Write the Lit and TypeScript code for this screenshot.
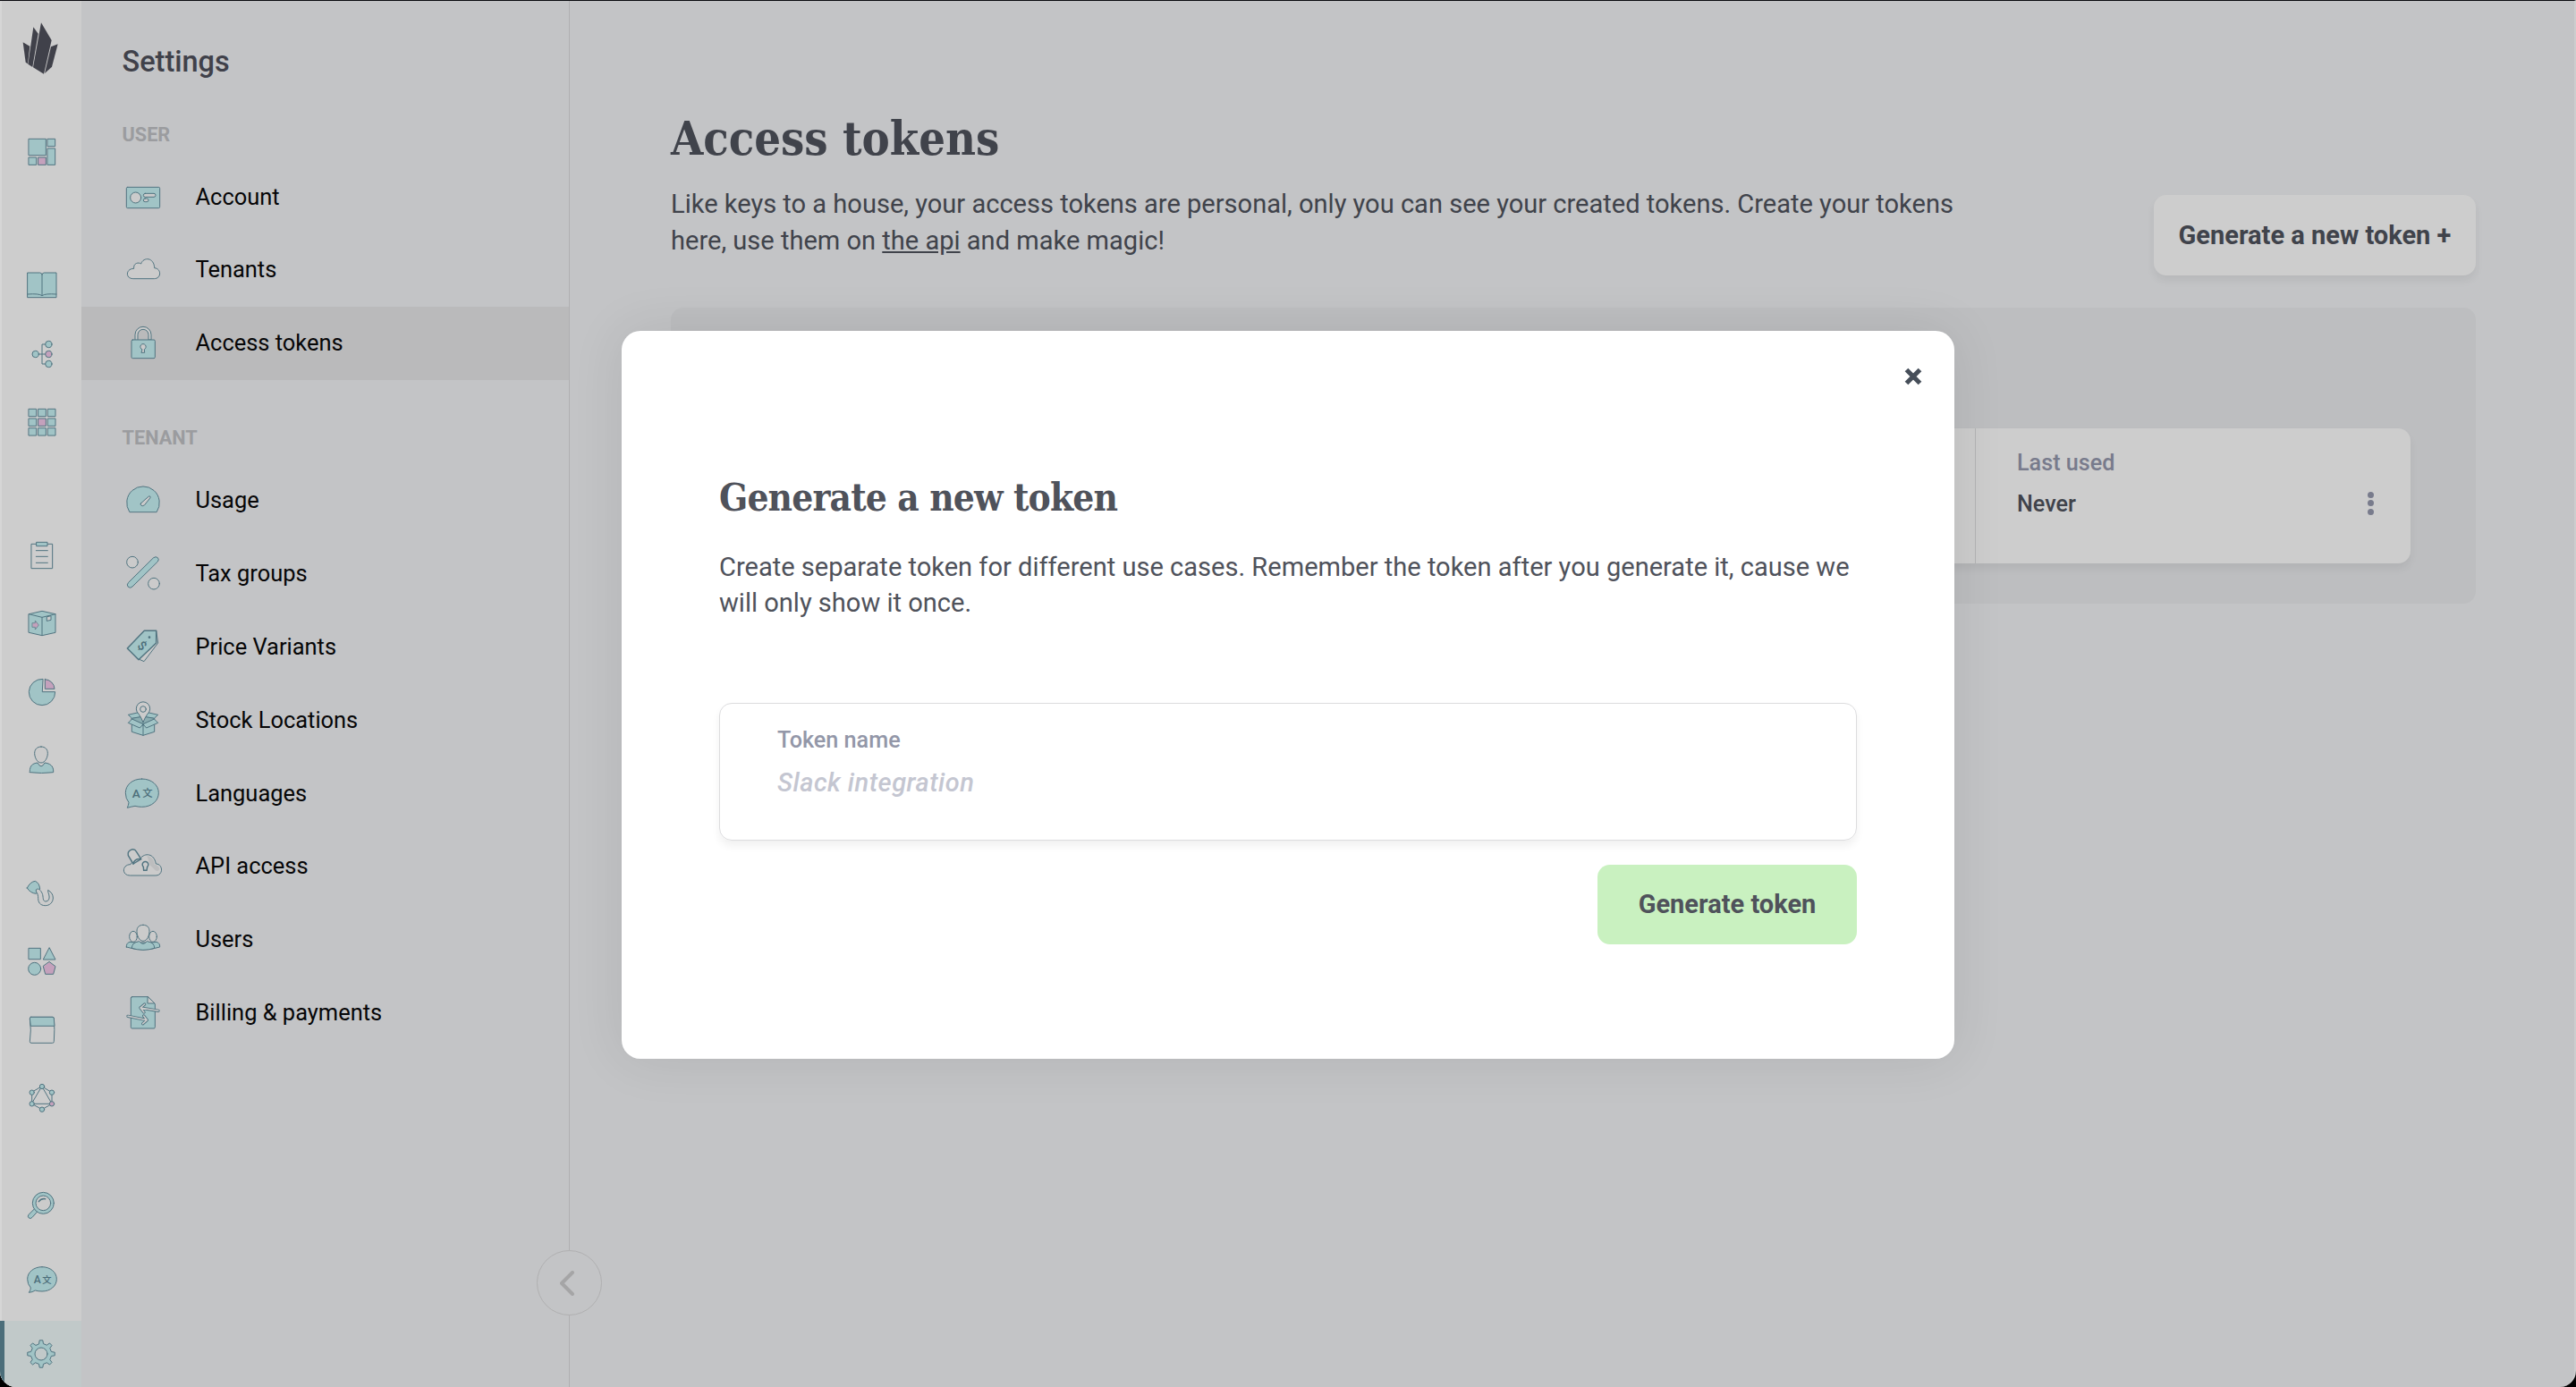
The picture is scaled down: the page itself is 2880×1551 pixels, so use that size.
import { LitElement, html, css, svg, nothing, TemplateResult, SVGTemplateResult } from 'lit';
import { customElement, property, state } from 'lit/decorators.js';
import { classMap } from 'lit/directives/class-map.js';

// Gear outline with square-ish teeth, centred on cx/cy
function gearPath(cx: number, cy: number, inner: number, outer: number, teeth: number): string {
  const pts: string[] = [];
  const step = (Math.PI * 2) / teeth;
  for (let i = 0; i < teeth; i++) {
    const a = i * step - Math.PI / 2;
    const corners: [number, number][] = [
      [inner, a - step * 0.27],
      [outer, a - step * 0.15],
      [outer, a + step * 0.15],
      [inner, a + step * 0.27],
    ];
    for (const [r, t] of corners) {
      pts.push(`${(cx + r * Math.cos(t)).toFixed(1)} ${(cy + r * Math.sin(t)).toFixed(1)}`);
    }
  }
  return `M${pts.join('L')}Z`;
}

// All icons share a 150x150 grid
const ICONS: Record<string, SVGTemplateResult> = {
  dashboard: svg`
    <rect class="f" x="31" y="31" width="57" height="55"/>
    <rect class="f" x="94" y="31" width="25" height="25"/>
    <rect class="f" x="94" y="63" width="25" height="55"/>
    <rect class="f" x="31" y="93" width="25" height="25"/>
    <rect class="p" x="63" y="93" width="25" height="25"/>`,
  book: svg`
    <path class="f" d="M27 33H68Q75 34 75 40Q75 34 82 33H123V116H27Z"/>
    <path class="n" d="M75 40V109M27 105Q65 102 75 110Q85 102 123 105"/>`,
  flow: svg`
    <path class="n" d="M64 75H86M86 42H75V108H86"/>
    <circle class="f" cx="53" cy="75" r="11"/>
    <circle class="f" cx="97" cy="42" r="11"/>
    <circle class="p" cx="97" cy="75" r="11"/>
    <circle class="f" cx="97" cy="108" r="11"/>`,
  grid: svg`${[0, 1, 2, 3, 4, 5, 6, 7, 8].map(i => svg`
    <rect class=${i === 4 ? 'p' : 'f'} x=${31 + (i % 3) * 32} y=${31 + Math.floor(i / 3) * 32} width="25" height="25"/>`)}`,
  clipboard: svg`
    <rect class="n" x="40" y="37" width="70" height="82"/>
    <rect class="f" x="57" y="31" width="36" height="13"/>
    <path class="n" d="M55 59H94M55 79H94M55 100H94"/>`,
  box: svg`
    <path class="f" d="M31 44L75 34L120 44V106L75 116L31 106Z"/>
    <path class="n" d="M31 44L75 55L120 44M75 55V116"/>
    <path class="l" d="M92 53L105 50V64L92 67Z"/>
    <path class="p thin" d="M43 74H52V66L64 81L52 96V88H43Z"/>`,
  pie: svg`
    <path class="f" d="M77 31A44 44 0 1 0 119 74H77Z"/>
    <path class="p" d="M85 32V64H117A33 33 0 0 0 85 32Z"/>`,
  person: svg`
    <path class="f" d="M34 111C34 95 42 86 60 84Q72 107 84 84C102 86 113 95 113 111V116Q74 121 34 116Z"/>
    <path class="l" d="M72 30c14 0 22 9 22 22s-8 32-22 32-22-19-22-32 8-22 22-22Z"/>`,
  hook: svg`
    <path class="f" d="M25 57Q35 36 52 34Q66 40 68 60Q60 68 55 76Q35 74 25 57Z"/>
    <path class="l" d="M56 62C64 56 70 64 76 76C80 86 76 100 86 102C98 102 100 92 99 84C98 76 94 70 95 64C105 70 112 78 112 90C112 106 100 116 86 116C68 116 62 104 62 92C62 82 60 74 56 70Z"/>`,
  shapes: svg`
    <rect class="f" x="31" y="31" width="39" height="37"/>
    <path class="f" d="M100 30L120 69H80Z"/>
    <circle class="f" cx="50" cy="100" r="21"/>
    <path class="p" d="M100 77L120 92L113 118H86L79 92Z"/>`,
  window: svg`
    <path class="n" d="M38 31H111Q115 31 115 36Q118 72 115 113Q115 118 110 118H39Q34 118 34 113Q40 75 34 36Q34 31 38 31Z"/>
    <path class="f" d="M38 31H111Q115 31 115 36L117 61H37L34 36Q34 31 38 31Z"/>`,
  graph: svg`
    <path class="n" d="M75 36L108 56V94L75 113L41 94V56ZM75 36L108 94H41Z"/>
    <circle class="f" cx="75" cy="36" r="8"/>
    <circle class="f" cx="108" cy="56" r="8"/>
    <circle class="p" cx="108" cy="94" r="8"/>
    <circle class="f" cx="75" cy="113" r="8"/>
    <circle class="f" cx="41" cy="94" r="8"/>
    <circle class="f" cx="41" cy="56" r="8"/>`,
  search: svg`
    <path class="f" d="M51 85L30 106Q25 112 31 117Q37 121 42 115L61 94Z"/>
    <circle class="f" cx="79" cy="67" r="36"/>
    <circle class="l" cx="79" cy="67" r="25"/>
    <path class="n thick" d="M64 62Q72 51 86 53"/>`,
  translate: svg`
    <path class="f" d="M75 32C103 32 124 50 124 73S103 114 75 114Q62 114 52 111Q43 117 31 118Q37 110 37 102Q26 90 26 73C26 50 47 32 75 32Z"/>
    <text class="glyph" x="47" y="87" font-size="36">A</text>
    <text class="glyph" x="76" y="86" font-size="31">文</text>`,
  gear: svg`
    <path class="f" d=${gearPath(72, 75, 35, 46, 8)}/>
    <circle class="hole" cx="72" cy="75" r="21"/>`,
  account: svg`
    <rect class="f" x="19" y="40" width="112" height="70" rx="4"/>
    <circle class="l" cx="50" cy="75" r="18"/>
    <rect class="l" x="76" y="61" width="41" height="12" rx="6"/>
    <rect class="l" x="76" y="78" width="17" height="11" rx="5.5"/>`,
  cloud: svg`
    <path class="l" d="M40 104C15 104 16 70 44 70C42 51 60 48 68 54C76 30 112 32 113 68C137 70 137 104 113 104Z"/>`,
  lock: svg`
    <path class="l" d="M48 63V46A27 27 0 0 1 102 46V63H93V46A18 18 0 0 0 57 46V63Z"/>
    <rect class="f" x="36" y="63" width="79" height="62" rx="4"/>
    <path class="l" d="M71 95A9.500 9.500 0 1 1 79 95L80 106H70Z"/>`,
  gauge: svg`
    <path class="f" d="M29 112A55 55 0 1 1 121 112Z"/>
    <path class="l" d="M67 84L94 60Q101 58 99 65L80 89Q74 94 69 91Q65 88 67 84Z"/>`,
  percent: svg`
    <circle class="l" cx="39" cy="35" r="19"/>
    <circle class="l" cx="111" cy="107" r="19"/>
    <path class="f" d="M110 20Q118 14 124 20Q130 26 124 33L39 117Q32 124 25 118Q18 111 25 104Z"/>`,
  tags: svg`
    <path class="l" d="M119 19L125 60L78 122L60 114Z"/>
    <path class="f thick" d="M22 78L79 19H119V60L60 116Z"/>
    <circle class="dot" cx="96" cy="41" r="4"/>
    <text class="glyph" x="60" y="82" font-size="42" font-weight="400" transform="rotate(42 70 68)">$</text>`,
  stock: svg`
    <path class="f" d="M37 80V112L75 124L113 112V80L75 90Z"/>
    <path class="d" d="M37 66L75 56L113 66V76L75 87L37 76Z"/>
    <path class="f" d="M37 66L25 55L60 47L72 60ZM113 66L125 55L90 47L78 60Z"/>
    <path class="f" d="M37 70L25 82L64 99L75 87ZM113 70L125 82L86 99L75 87Z"/>
    <path class="n" d="M75 87V124"/>
    <path class="l" d="M75 80Q70 66 60 52A23 23 0 1 1 90 52Q80 66 75 80Z"/>
    <circle class="n" cx="75" cy="36" r="10"/>`,
  languages: svg`
    <path class="f" d="M71 24C104 24 127 45 127 71S104 118 71 118Q60 118 48 115Q36 117 22 121Q26 112 27 103Q16 90 16 71C16 45 38 24 71 24Z"/>
    <text class="glyph" x="38" y="86" font-size="41">A</text>
    <text class="glyph" x="73" y="85" font-size="34">文</text>`,
  api: svg`
    <path class="l" d="M30 105C2 105 4 68 33 68Q38 54 66 48C80 28 112 30 118 66C142 66 144 105 118 105Z"/>
    <path class="shade" d="M88 38Q110 42 113 68Q128 70 130 84Q126 94 116 88L98 70Z"/>
    <path class="l thick" d="M42 66L25 38Q22 24 34 19Q46 14 53 26L68 50Z"/>
    <path class="n thick" d="M42 66Q46 48 68 50"/>
    <path class="l thick" d="M76 76A10 10 0 1 1 89 76L87 88H77Z"/>`,
  users: svg`
    <path class="f" d="M19 99Q18 86 30 82L45 84H105L120 82Q132 86 131 99Q75 117 19 99Z"/>
    <ellipse class="l" cx="42" cy="64" rx="13" ry="18"/>
    <ellipse class="l" cx="108" cy="64" rx="13" ry="18"/>
    <path class="f" d="M37 103Q36 84 62 80Q75 96 88 80Q114 84 113 103Q75 115 37 103Z"/>
    <path class="l" d="M75 25C89 25 96 33 96 46S89 79 75 79 54 59 54 46 61 25 75 25Z"/>`,
  billing: svg`
    <path class="f" d="M38 20H91L115 44V122Q115 126 111 126H38Q34 126 34 122V24Q34 20 38 20Z"/>
    <path class="l" d="M91 20L114 42H91Z"/>
    <path class="edge" d="M126 67L66 57M80 45L66 57L78 72M24 85L88 98M77 84L88 98L74 110"/>
    <path class="core" d="M126 67L66 57M80 45L66 57L78 72M24 85L88 98M77 84L88 98L74 110"/>`,
};

@customElement('app-icon')
export class AppIcon extends LitElement {
  @property({ type: String }) name = '';

  static styles = css`
    :host {
      display: block;
      flex: none;
      width: 50px;
      height: 50px;
    }
    svg {
      display: block;
      width: 100%;
      height: 100%;
      overflow: visible;
      stroke: #517480;
      stroke-width: 3;
      stroke-linejoin: round;
      stroke-linecap: round;
    }
    .f { fill: #a1c4c6; }
    .p { fill: #c4a1bc; }
    .l { fill: #cbcbcb; }
    .d { fill: #8badb1; }
    .n { fill: none; }
    .hole { fill: #c1c9c9; }
    .shade { fill: #bcbdbe; stroke: none; }
    .thin { stroke-width: 2; }
    .thick { stroke-width: 4.4; }
    .dot { fill: #517480; stroke: none; }
    .edge { fill: none; stroke-width: 10; }
    .core { fill: none; stroke: #cbcbcb; stroke-width: 4.600; }
    .glyph {
      fill: #4c6e7a;
      stroke: none;
      font-family: Roboto, 'Noto Sans CJK SC', sans-serif;
      font-weight: 500;
    }
  `;

  render() {
    return html`<svg viewBox="0 0 150 150" aria-hidden="true">${ICONS[this.name] ?? nothing}</svg>`;
  }
}

interface MenuItem {
  icon: string;
  label: string;
}

const RAIL_GROUPS: string[][] = [
  ['dashboard'],
  ['book', 'flow', 'grid'],
  ['clipboard', 'box', 'pie', 'person'],
  ['hook', 'shapes', 'window', 'graph'],
];

@customElement('app-rail')
export class AppRail extends LitElement {
  static styles = css`
    :host {
      display: flex;
      flex-direction: column;
      box-sizing: border-box;
      width: 91px;
      height: 100%;
      background: #cdcdcd;
      border-left: 2px solid #d6d6d6;
    }
    .logo {
      display: block;
      width: 50px;
      height: 66px;
      margin: 20px 0 0 18px;
      fill: #40414a;
    }
    .groups {
      display: flex;
      flex-direction: column;
      gap: 72.600px;
      margin-top: 45px;
    }
    .cell {
      display: flex;
      align-items: center;
      height: 76.400px;
      padding-left: 20px;
    }
    .bottom { margin-top: auto; }
    .bottom .cell { height: 83.500px; }
    .bottom .cell.active {
      box-sizing: border-box;
      height: 74px;
      margin: 4px 0 0 -2px;
      padding-left: 17px;
      border-left: 5px solid #4c6e7a;
      background: #c1c9c9;
    }
  `;

  render() {
    return html`
      <svg class="logo" viewBox="58 63 150 198" aria-label="Logo">
        <path d="M136 76L171 135L145 248L109 226Z"/>
        <path d="M110 91L126 113L107 225L92 215Z"/>
        <path d="M75 142L98 155L91 214L84 209Z"/>
        <path d="M192 148L169 157L148 246L172 224Z"/>
      </svg>
      <div class="groups">
        ${RAIL_GROUPS.map(group => html`
          <div>${group.map(name => html`<div class="cell"><app-icon name=${name}></app-icon></div>`)}</div>
        `)}
      </div>
      <div class="bottom">
        <div class="cell"><app-icon name="search"></app-icon></div>
        <div class="cell"><app-icon name="translate"></app-icon></div>
        <div class="cell active"><app-icon name="gear"></app-icon></div>
      </div>
    `;
  }
}

@customElement('settings-menu')
export class SettingsMenu extends LitElement {
  @property({ type: String }) selected = '';

  private _user: MenuItem[] = [
    { icon: 'account', label: 'Account' },
    { icon: 'cloud', label: 'Tenants' },
    { icon: 'lock', label: 'Access tokens' },
  ];
  private _tenant: MenuItem[] = [
    { icon: 'gauge', label: 'Usage' },
    { icon: 'percent', label: 'Tax groups' },
    { icon: 'tags', label: 'Price Variants' },
    { icon: 'stock', label: 'Stock Locations' },
    { icon: 'languages', label: 'Languages' },
    { icon: 'api', label: 'API access' },
    { icon: 'users', label: 'Users' },
    { icon: 'billing', label: 'Billing & payments' },
  ];

  static styles = css`
    :host {
      display: block;
      position: relative;
      box-sizing: border-box;
      width: 546px;
      height: 100%;
      padding-top: 48px;
      border-right: 1px solid #b0b0b1;
    }
    h2 {
      margin: 0 0 46.700px 45.500px;
      font-size: 32.500px;
      font-weight: 500;
      line-height: 40px;
      color: #40414a;
    }
    h3 {
      margin: 0 0 14px 45.500px;
      font-size: 21.700px;
      font-weight: 700;
      line-height: 30px;
      color: #9b9c9f;
    }
    ul {
      margin: 0 0 50.400px;
      padding: 0;
      list-style: none;
    }
    li {
      display: flex;
      align-items: center;
      gap: 33.500px;
      height: 81.800px;
      padding-left: 44px;
      font-size: 25.450px;
      color: #060607;
    }
    li span { padding-bottom: 2px; }
    .selected { background: #bababb; }
    .collapse {
      position: absolute;
      right: -37px;
      bottom: 80px;
      display: grid;
      place-items: center;
      width: 73px;
      height: 73px;
      box-sizing: border-box;
      border: 1px solid #b0b0b1;
      border-radius: 50%;
      background: #c3c4c6;
    }
    .collapse svg {
      width: 16px;
      height: 28px;
      margin-right: 6px;
      fill: none;
      stroke: #a5a5a6;
      stroke-width: 4;
      stroke-linecap: round;
      stroke-linejoin: round;
    }
  `;

  private _list(items: MenuItem[]): TemplateResult {
    return html`
      <ul>
        ${items.map(item => html`
          <li class=${classMap({ selected: item.label === this.selected })}>
            <app-icon name=${item.icon}></app-icon>
            <span>${item.label}</span>
          </li>
        `)}
      </ul>
    `;
  }

  render() {
    return html`
      <h2>Settings</h2>
      <h3>USER</h3>
      ${this._list(this._user)}
      <h3>TENANT</h3>
      ${this._list(this._tenant)}
      <div class="collapse">
        <svg viewBox="0 0 16 28"><path d="M14 2L2 14L14 26"/></svg>
      </div>
    `;
  }
}

@customElement('token-dialog')
export class TokenDialog extends LitElement {
  @state() private _name = '';

  static styles = css`
    :host {
      display: block;
      box-sizing: border-box;
      width: 1490px;
      height: 814px;
      padding: 0 109px;
      border-radius: 21px;
      background: #fff;
      box-shadow: 0 0 60px rgba(0, 0, 0, 0.09);
      color: #4f525b;
    }
    .close {
      display: flex;
      justify-content: flex-end;
      height: 108px;
      margin-right: -73px;
      padding-top: 41px;
      box-sizing: border-box;
    }
    .close svg {
      width: 20px;
      height: 20px;
      stroke: #464e59;
      stroke-width: 5.200;
    }
    h2 {
      margin: 49px 0 0;
      font: 700 42px/60px 'Roboto Slab', 'DejaVu Serif', serif;
      font-stretch: condensed;
      letter-spacing: -0.850px;
      white-space: nowrap;
    }
    p {
      margin: 27px 0 0;
      font-size: 29.060px;
      line-height: 40px;
      white-space: nowrap;
    }
    .field {
      display: block;
      box-sizing: border-box;
      height: 154px;
      margin-top: 92px;
      padding: 24px 64px;
      border: 1px solid #dcdcde;
      border-radius: 14px;
      box-shadow: 0 6px 10px rgba(0, 0, 0, 0.06);
    }
    .label {
      display: block;
      font-size: 25.200px;
      font-weight: 500;
      line-height: 34px;
      color: #9397a8;
    }
    input {
      display: block;
      width: 100%;
      height: 40px;
      margin-top: 10px;
      padding: 0;
      border: 0;
      outline: 0;
      background: none;
      font: 500 29px/40px Roboto, sans-serif;
      color: #4f525b;
    }
    input::placeholder {
      color: #c4c6d1;
      font-style: italic;
      letter-spacing: 0.500px;
      opacity: 1;
    }
    .actions {
      display: flex;
      justify-content: flex-end;
      margin-top: 27px;
    }
    button {
      width: 290px;
      height: 89px;
      padding: 0 0 2px;
      border: 0;
      border-radius: 14px;
      background: #c9f1c0;
      font: 700 29px/40px Roboto, sans-serif;
      color: #4f525b;
    }
  `;

  private _handleInput(event: Event) {
    this._name = (event.target as HTMLInputElement).value;
  }

  render() {
    return html`
      <div class="close">
        <svg viewBox="0 0 20 20"><path d="M2.500 2.500L17.500 17.500M17.500 2.500L2.500 17.500"/></svg>
      </div>
      <h2>Generate a new token</h2>
      <p>
        Create separate token for different use cases. Remember the token after you generate it, cause we<br>
        will only show it once.
      </p>
      <label class="field">
        <span class="label">Token name</span>
        <input placeholder="Slack integration" .value=${this._name} @input=${this._handleInput}>
      </label>
      <div class="actions"><button>Generate token</button></div>
    `;
  }
}

@customElement('app-root')
export class AppRoot extends LitElement {
  static styles = css`
    :host {
      display: block;
      width: 2880px;
      height: 1551px;
      background: #000;
      font-family: Roboto, sans-serif;
    }
    .window {
      position: relative;
      display: flex;
      box-sizing: border-box;
      height: 100%;
      border-top: 1px solid #0b0b10;
      border-right: 2px solid #cdcdce;
      border-radius: 0 0 18px 18px;
      overflow: hidden;
      background: #c3c4c6;
      color: #40434b;
    }
    main {
      flex: 1;
      padding: 122px 110px 0 113px;
    }
    header {
      display: flex;
      align-items: flex-end;
      justify-content: space-between;
    }
    h1 {
      margin: 0;
      font: 700 52px/64px 'Roboto Slab', 'DejaVu Serif', serif;
      font-stretch: condensed;
      white-space: nowrap;
    }
    p {
      margin: 21px 0 18px;
      font-size: 29.060px;
      line-height: 41px;
      white-space: nowrap;
    }
    a {
      color: inherit;
      text-decoration: underline;
    }
    .generate {
      width: 360px;
      height: 90px;
      padding: 0;
      border: 0;
      border-radius: 14px;
      background: #cdcdcd;
      box-shadow: 0 6px 10px rgba(0, 0, 0, 0.06);
      font: 700 29px/40px Roboto, sans-serif;
      color: #40434b;
    }
    .panel {
      box-sizing: border-box;
      height: 331px;
      margin-top: 36px;
      padding: 135px 73px 0;
      border-radius: 14px;
      background: #bdbec0;
    }
    .row {
      display: grid;
      grid-template-columns: 1fr 487px;
      height: 151px;
      border-radius: 14px;
      background: #cdcdcd;
      box-shadow: 0 6px 10px rgba(0, 0, 0, 0.06);
    }
    .used {
      display: flex;
      align-items: flex-start;
      justify-content: space-between;
      padding: 22px 41px 0 46px;
      border-left: 1px solid #b3b3b4;
      font-size: 25.200px;
      font-weight: 500;
      line-height: 34px;
    }
    .caption {
      margin-bottom: 12px;
      color: #787b8c;
    }
    .dots {
      display: flex;
      flex-direction: column;
      gap: 2.400px;
      margin-top: 49px;
    }
    .dots span {
      width: 7px;
      height: 7px;
      border-radius: 50%;
      background: #787b8c;
    }
    token-dialog {
      position: absolute;
      left: 695px;
      top: 369px;
    }
  `;

  render() {
    return html`
      <div class="window">
        <app-rail></app-rail>
        <settings-menu selected="Access tokens"></settings-menu>
        <main>
          <header>
            <div>
              <h1>Access tokens</h1>
              <p>
                Like keys to a house, your access tokens are personal, only you can see your created tokens. Create your tokens<br>
                here, use them on <a>the api</a> and make magic!
              </p>
            </div>
            <button class="generate">Generate a new token +</button>
          </header>
          <section class="panel">
            <div class="row">
              <div></div>
              <div class="used">
                <div>
                  <div class="caption">Last used</div>
                  <div>Never</div>
                </div>
                <div class="dots"><span></span><span></span><span></span></div>
              </div>
            </div>
          </section>
        </main>
        <token-dialog></token-dialog>
      </div>
    `;
  }
}
